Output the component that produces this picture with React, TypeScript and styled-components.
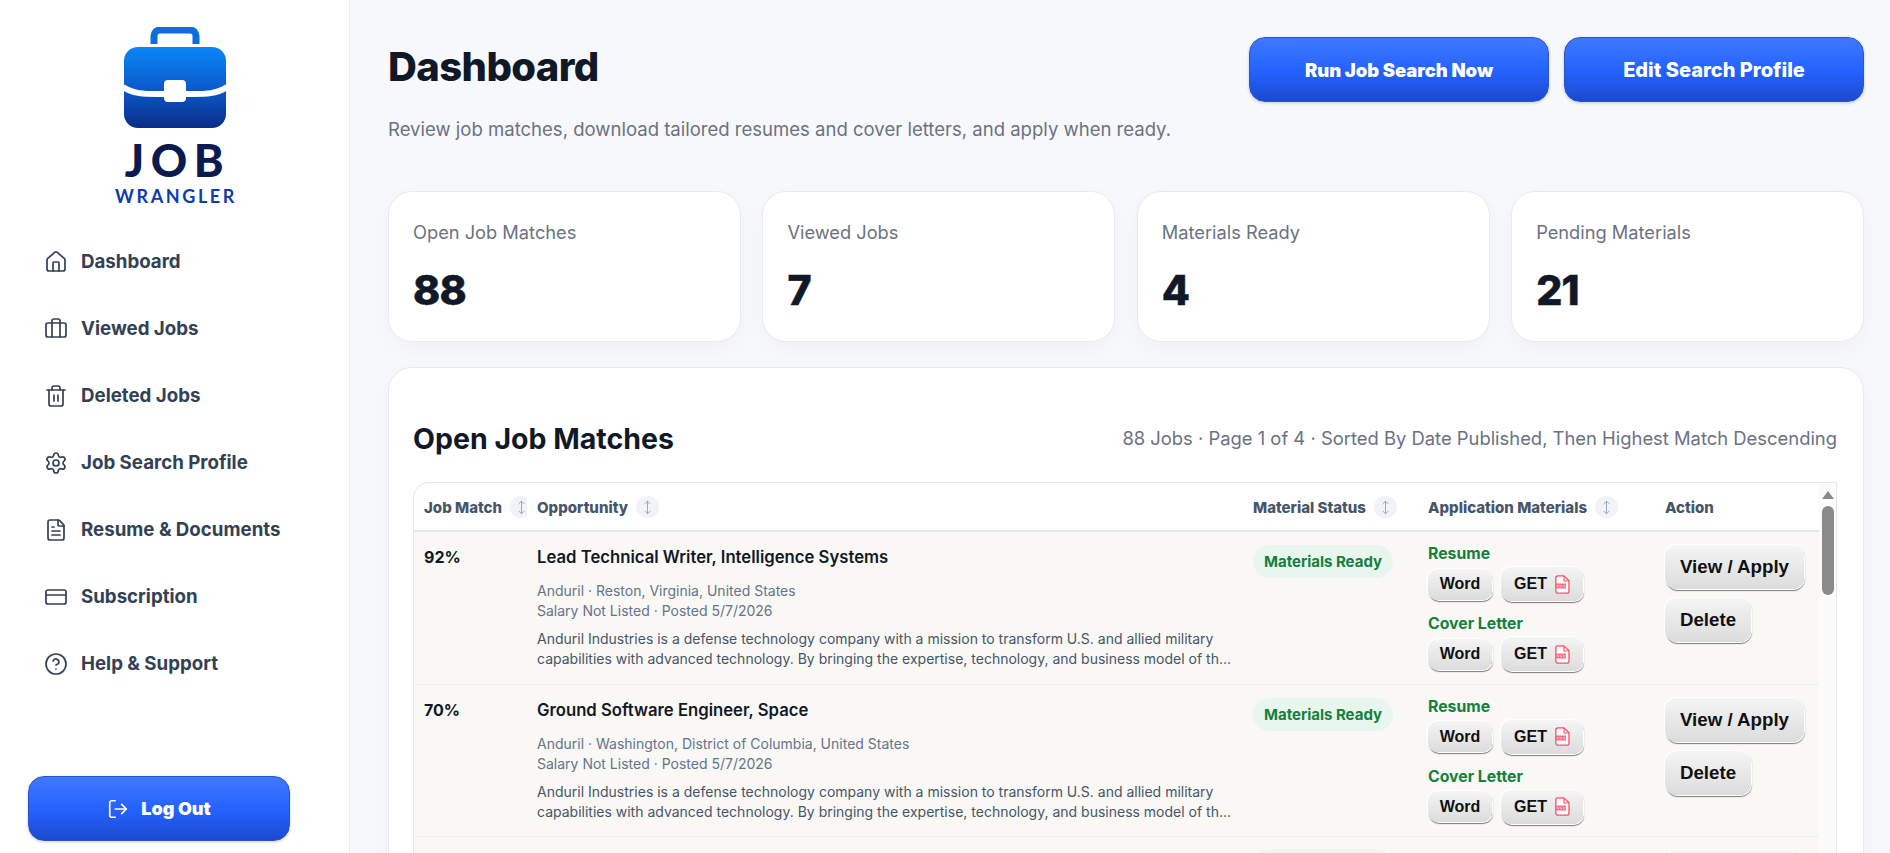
import styled, { createGlobalStyle } from 'styled-components';
import {
  Briefcase,
  CircleHelp,
  CreditCard,
  FileText,
  House,
  LogOut,
  MoveVertical,
  Settings,
  Trash2,
} from 'lucide-react';

const GlobalStyle = createGlobalStyle`
  * { box-sizing: border-box; }
  html, body { margin: 0; height: 100%; }
  body {
    font-family: Inter, "Noto Sans", sans-serif;
    background: #f7f8fc;
    color: #111827;
  }
`;

const Shell = styled.div`
  display: flex;
  height: 100vh;
  overflow: hidden;
`;

const Sidebar = styled.aside`
  flex: 0 0 350px;
  display: flex;
  flex-direction: column;
  padding: 27px 0 12px;
  background: #fff;
  border-right: 1px solid #e8eaf0;
`;

const LogoWrap = styled.div`
  display: flex;
  flex-direction: column;
  align-items: center;
`;

const LogoWord = styled.div`
  margin-top: 9px;
  padding-left: 6px;
  font-family: Lato, Inter, sans-serif;
  font-size: 45px;
  font-weight: 900;
  line-height: 44px;
  letter-spacing: 6.5px;
  color: #0b1a4f;
`;

const LogoSub = styled.div`
  margin-top: 3px;
  padding-left: 3px;
  font-family: Lato, Inter, sans-serif;
  font-size: 18px;
  font-weight: 700;
  line-height: 22px;
  letter-spacing: 2.6px;
  color: #0f3ab0;
`;

const Nav = styled.nav`
  margin-top: 21px;
  display: flex;
  flex-direction: column;
`;

const NavItem = styled.a`
  height: 67px;
  padding-left: 44px;
  display: flex;
  align-items: center;
  gap: 13px;
  font-size: 18.7px;
  font-weight: 700;
  color: #334155;
  cursor: pointer;

  & svg {
    width: 24px;
    height: 24px;
    stroke-width: 1.7;
  }
`;

const BlueButton = styled.button<{ $size: number; $weight: number }>`
  height: 65px;
  display: flex;
  align-items: center;
  justify-content: center;
  gap: 12px;
  border: 1px solid #2c56c4;
  border-radius: 16px;
  background: linear-gradient(#4079ff 0%, #2563ff 50%, #1b4ad0 100%);
  box-shadow: 0 1px 3px rgba(15, 23, 42, 0.22);
  font-family: Inter, sans-serif;
  font-size: ${({ $size }) => $size}px;
  font-weight: ${({ $weight }) => $weight};
  color: #fff;
  cursor: pointer;
`;

const LogoutButton = styled(BlueButton)`
  margin: auto 0 0 28px;
  width: 262px;
`;

const Main = styled.main`
  flex: 1;
  min-width: 0;
  padding: 37px 26px 0 38px;
  overflow: hidden;
`;

const Header = styled.header`
  display: flex;
  justify-content: space-between;
  align-items: flex-start;
  margin-bottom: 48px;
`;

const Title = styled.h1`
  margin: 6px 0 0;
  font-size: 40px;
  font-weight: 800;
  line-height: 48px;
  letter-spacing: -0.6px;
  color: #111827;
`;

const Subtitle = styled.p`
  margin: 24px 0 0;
  font-size: 18.55px;
  line-height: 28px;
  color: #6b7280;
`;

const HeaderActions = styled.div`
  display: flex;
  gap: 15px;
  & > button {
    width: 300px;
  }
`;

const StatGrid = styled.section`
  display: grid;
  grid-template-columns: repeat(4, 1fr);
  gap: 21.5px;
`;

const StatCard = styled.div`
  height: 151px;
  padding: 28px 24px 0;
  background: #fff;
  border: 1px solid #e8eaf0;
  border-radius: 24px;
  box-shadow: 0 8px 24px rgba(15, 23, 42, 0.03);
`;

const StatLabel = styled.div`
  font-size: 18.25px;
  line-height: 24px;
  color: #6b7280;
`;

const StatValue = styled.div`
  margin-top: 21px;
  font-size: 41px;
  font-weight: 800;
  line-height: 50px;
  letter-spacing: -0.8px;
  color: #111827;
  -webkit-text-stroke: 0.5px #111827;
`;

const Panel = styled.section`
  margin-top: 25px;
  padding: 47px 26px 0 24px;
  background: #fff;
  border: 1px solid #e8eaf0;
  border-radius: 24px;
  box-shadow: 0 8px 24px rgba(15, 23, 42, 0.03);
`;

const PanelHead = styled.div`
  height: 46px;
  margin-bottom: 21px;
  display: flex;
  justify-content: space-between;
  align-items: center;
`;

const PanelTitle = styled.h2`
  margin: 0;
  font-size: 28.5px;
  font-weight: 700;
  color: #111827;
`;

const PanelInfo = styled.div`
  font-size: 18.4px;
  color: #6b7280;
`;

const TableFrame = styled.div`
  display: flex;
  background: #fff;
  border: 1px solid #e5e7eb;
  border-radius: 16px 0 0 0;
  overflow: hidden;
`;

const TableBody = styled.div`
  flex: 1;
  min-width: 0;
`;

const ScrollRail = styled.div`
  flex: 0 0 17px;
  display: flex;
  flex-direction: column;
  align-items: center;
  padding-top: 8px;
  background: #fbfbfb;
`;

const ScrollArrow = styled.span`
  width: 0;
  height: 0;
  border-left: 6.5px solid transparent;
  border-right: 6.5px solid transparent;
  border-bottom: 8px solid #8a8a8a;
`;

const ScrollThumb = styled.span`
  width: 12px;
  height: 89px;
  margin-top: 7px;
  border-radius: 6px;
  background: #8a8a8a;
`;

const columns = '113px 716px 175px 237px 1fr';

const HeadRow = styled.div`
  display: grid;
  grid-template-columns: ${columns};
  height: 49px;
  padding-top: 1px;
  align-items: center;
  border-bottom: 2px solid #e5e7eb;
`;

const HeadCell = styled.div`
  display: flex;
  align-items: center;
  gap: 8px;
  padding-left: 10px;
  overflow: hidden;
  font-size: 15px;
  font-weight: 800;
  color: #475569;
  white-space: nowrap;
`;

const SortPill = styled.span`
  flex: 0 0 23px;
  height: 22px;
  display: flex;
  align-items: center;
  justify-content: center;
  border-radius: 11px;
  background: #f1f3f8;
  color: #94a3b8;
`;

const Row = styled.div`
  display: grid;
  grid-template-columns: ${columns};
  height: 152.5px;
  background: #f9f8f4;
  border-bottom: 1px solid #eeeeee;
`;

const Cell = styled.div`
  padding: 12px 10px 0;
  min-width: 0;
`;

const Match = styled.div`
  font-size: 16px;
  font-weight: 700;
  line-height: 26px;
  color: #111827;
`;

const JobTitle = styled.div`
  font-size: 16.7px;
  font-weight: 600;
  line-height: 26px;
  color: #111827;
`;

const Meta = styled.div`
  margin-top: 11px;
  font-size: 14px;
  line-height: 20px;
  color: #64748b;
`;

const Description = styled.div`
  margin-top: 8px;
  font-size: 14px;
  line-height: 20px;
  color: #475569;
`;

const StatusPill = styled.span`
  display: flex;
  align-items: center;
  justify-content: center;
  width: 140px;
  height: 33px;
  margin-top: 1px;
  border-radius: 17px;
  background: #e8f6ee;
  font-size: 15px;
  font-weight: 700;
  color: #15803d;
`;

const MaterialLabel = styled.div`
  font-size: 15.8px;
  font-weight: 700;
  line-height: 20px;
  color: #15803d;
`;

const MaterialGroup = styled.div`
  & + & {
    margin-top: 13px;
  }
`;

const MaterialButtons = styled.div`
  margin-top: 3px;
  display: flex;
  align-items: center;
  gap: 9px;
`;

const GrayButton = styled.button`
  display: flex;
  align-items: center;
  justify-content: center;
  padding: 0;
  border: 0;
  background: linear-gradient(#f5f5f5, #dcdcdc);
  box-shadow: -1px -1px 0 #fff, 1px 1px 0 #fff, 1px 2px 1px rgba(0, 0, 0, 0.5);
  font-family: "Liberation Sans", Arial, sans-serif;
  font-weight: 700;
  color: #111;
  cursor: pointer;
`;

const SmallButton = styled(GrayButton)<{ $width: number; $height: number }>`
  width: ${({ $width }) => $width}px;
  height: ${({ $height }) => $height}px;
  gap: 8px;
  border-radius: 10px;
  font-size: 16px;
`;

const ActionStack = styled.div`
  margin-top: 1px;
  display: flex;
  flex-direction: column;
  align-items: flex-start;
  gap: 9px;
`;

const ActionButton = styled(GrayButton)<{ $width: number }>`
  width: ${({ $width }) => $width}px;
  height: 44px;
  border-radius: 12px;
  font-size: 18.7px;
`;

const Logo = () => (
  <svg width="104" height="102" viewBox="0 0 104 102" fill="none">
    <defs>
      <linearGradient id="bag" x1="0" y1="20" x2="0" y2="102" gradientUnits="userSpaceOnUse">
        <stop offset="0" stopColor="#0a86f7" />
        <stop offset="0.5" stopColor="#0b5bcb" />
        <stop offset="1" stopColor="#0a2b85" />
      </linearGradient>
    </defs>
    <path
      d="M31 17V9a6 6 0 0 1 6-6h30a6 6 0 0 1 6 6v8"
      stroke="#0a6fdc"
      strokeWidth="7"
    />
    <rect x="1" y="20" width="102" height="81" rx="14" fill="url(#bag)" />
    <path d="M0 60c10 7 22 7 34 7h36c12 0 24 0 34-7" stroke="#fff" strokeWidth="6" />
    <rect x="41" y="53" width="22" height="22" rx="4" fill="#fff" />
  </svg>
);

const PdfIcon = () => (
  <svg width="15" height="19" viewBox="0 0 15 19" fill="none">
    <path
      d="M3 .8h6l5 5v10.2a2.2 2.2 0 0 1-2.2 2.2H3A2.2 2.2 0 0 1 .8 16V3A2.2 2.2 0 0 1 3 .8Z"
      stroke="#f4516c"
      strokeWidth="1.3"
      fill="#fff"
    />
    <path d="M9 1v5h5" stroke="#f4516c" strokeWidth="1.1" />
    <rect x="0.5" y="8.5" width="10.5" height="5" fill="#fb7185" />
    <path d="M2 11h2M5 11h2M8 11h2" stroke="#ffe4e8" strokeWidth="1.1" />
  </svg>
);

const NAV_ITEMS = [
  { label: 'Dashboard', icon: <House /> },
  { label: 'Viewed Jobs', icon: <Briefcase /> },
  { label: 'Deleted Jobs', icon: <Trash2 /> },
  { label: 'Job Search Profile', icon: <Settings /> },
  { label: 'Resume & Documents', icon: <FileText /> },
  { label: 'Subscription', icon: <CreditCard /> },
  { label: 'Help & Support', icon: <CircleHelp /> },
];

const STATS = [
  { label: 'Open Job Matches', value: 88 },
  { label: 'Viewed Jobs', value: 7 },
  { label: 'Materials Ready', value: 4 },
  { label: 'Pending Materials', value: 21 },
];

const ABOUT =
  'Anduril Industries is a defense technology company with a mission to transform U.S. and allied military capabilities with advanced technology. By bringing the expertise, technology, and business model of th...';

const JOBS = [
  {
    match: '92%',
    title: 'Lead Technical Writer, Intelligence Systems',
    place: 'Anduril · Reston, Virginia, United States',
  },
  {
    match: '70%',
    title: 'Ground Software Engineer, Space',
    place: 'Anduril · Washington, District of Columbia, United States',
  },
];

const SortHead = ({ label }: { label: string }) => (
  <HeadCell>
    {label}
    <SortPill>
      <MoveVertical size={15} strokeWidth={1.5} />
    </SortPill>
  </HeadCell>
);

const MaterialRow = ({ label }: { label: string }) => (
  <MaterialGroup>
    <MaterialLabel>{label}</MaterialLabel>
    <MaterialButtons>
      <SmallButton $width={64} $height={31}>
        Word
      </SmallButton>
      <SmallButton $width={82} $height={34}>
        GET
        <PdfIcon />
      </SmallButton>
    </MaterialButtons>
  </MaterialGroup>
);

export default function App() {
  return (
    <Shell>
      <GlobalStyle />
      <Sidebar>
        <LogoWrap>
          <Logo />
          <LogoWord>JOB</LogoWord>
          <LogoSub>WRANGLER</LogoSub>
        </LogoWrap>
        <Nav>
          {NAV_ITEMS.map(item => (
            <NavItem key={item.label}>
              {item.icon}
              {item.label}
            </NavItem>
          ))}
        </Nav>
        <LogoutButton $size={18} $weight={900}>
          <LogOut size={22} strokeWidth={1.8} />
          Log Out
        </LogoutButton>
      </Sidebar>

      <Main>
        <Header>
          <div>
            <Title>Dashboard</Title>
            <Subtitle>
              Review job matches, download tailored resumes and cover letters, and apply when ready.
            </Subtitle>
          </div>
          <HeaderActions>
            <BlueButton $size={18.4} $weight={900}>
              Run Job Search Now
            </BlueButton>
            <BlueButton $size={20} $weight={800}>
              Edit Search Profile
            </BlueButton>
          </HeaderActions>
        </Header>

        <StatGrid>
          {STATS.map(stat => (
            <StatCard key={stat.label}>
              <StatLabel>{stat.label}</StatLabel>
              <StatValue>{stat.value}</StatValue>
            </StatCard>
          ))}
        </StatGrid>

        <Panel>
          <PanelHead>
            <PanelTitle>Open Job Matches</PanelTitle>
            <PanelInfo>
              88 Jobs · Page 1 of 4 · Sorted By Date Published, Then Highest Match Descending
            </PanelInfo>
          </PanelHead>
          <TableFrame>
            <TableBody>
              <HeadRow>
                <SortHead label="Job Match" />
                <SortHead label="Opportunity" />
                <SortHead label="Material Status" />
                <SortHead label="Application Materials" />
                <HeadCell>Action</HeadCell>
              </HeadRow>
              {JOBS.map(job => (
                <Row key={job.title}>
                  <Cell>
                    <Match>{job.match}</Match>
                  </Cell>
                  <Cell>
                    <JobTitle>{job.title}</JobTitle>
                    <Meta>
                      {job.place}
                      <br />
                      Salary Not Listed · Posted 5/7/2026
                    </Meta>
                    <Description>{ABOUT}</Description>
                  </Cell>
                  <Cell>
                    <StatusPill>Materials Ready</StatusPill>
                  </Cell>
                  <Cell>
                    <MaterialRow label="Resume" />
                    <MaterialRow label="Cover Letter" />
                  </Cell>
                  <Cell>
                    <ActionStack>
                      <ActionButton $width={139}>View / Apply</ActionButton>
                      <ActionButton $width={86}>Delete</ActionButton>
                    </ActionStack>
                  </Cell>
                </Row>
              ))}
              {/* next row only peeks in at the bottom of the window */}
              <Row>
                <Cell />
                <Cell />
                <Cell>
                  <StatusPill />
                </Cell>
                <Cell />
                <Cell>
                  <ActionStack>
                    <ActionButton $width={139} />
                  </ActionStack>
                </Cell>
              </Row>
            </TableBody>
            <ScrollRail>
              <ScrollArrow />
              <ScrollThumb />
            </ScrollRail>
          </TableFrame>
        </Panel>
      </Main>
    </Shell>
  );
}
